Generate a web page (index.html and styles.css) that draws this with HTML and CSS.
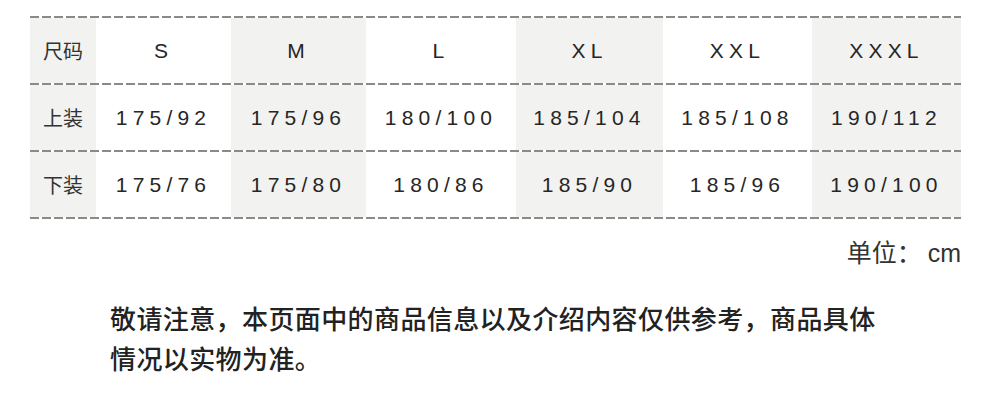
FILE: index.html
```html
<!DOCTYPE html>
<html lang="zh-CN">
<head>
<meta charset="utf-8">
<title>尺码表</title>
<link rel="stylesheet" href="styles.css">
</head>
<body>
<div class="page">
  <div class="size-table">
    <div class="row">
      <div class="cell label gray">尺码</div>
      <div class="cell">S</div>
      <div class="cell gray">M</div>
      <div class="cell">L</div>
      <div class="cell gray">XL</div>
      <div class="cell">XXL</div>
      <div class="cell gray">XXXL</div>
    </div>
    <div class="row">
      <div class="cell label gray">上装</div>
      <div class="cell">175/92</div>
      <div class="cell gray">175/96</div>
      <div class="cell">180/100</div>
      <div class="cell gray">185/104</div>
      <div class="cell">185/108</div>
      <div class="cell gray">190/112</div>
    </div>
    <div class="row">
      <div class="cell label gray">下装</div>
      <div class="cell">175/76</div>
      <div class="cell gray">175/80</div>
      <div class="cell">180/86</div>
      <div class="cell gray">185/90</div>
      <div class="cell">185/96</div>
      <div class="cell gray">190/100</div>
    </div>
  </div>
  <div class="unit">单位：<span class="unit-value">cm</span></div>
  <p class="note">敬请注意，本页面中的商品信息以及介绍内容仅供参考，商品具体情况以实物为准。</p>
</div>
</body>
</html>
```

FILE: styles.css
```css
html, body {
  margin: 0;
  padding: 0;
  background: #ffffff;
}

body {
  font-family: "Liberation Sans", "Noto Sans CJK SC", sans-serif;
  color: #2a2a2a;
}

.page {
  padding: 16px 29px 0 30px;
}

.size-table {
  width: 931px;
  padding-top: 2px;
  background: repeating-linear-gradient(to right, #8a8a8a 0 9px, transparent 9px 12px) left top / 100% 2px no-repeat;
}

.row {
  display: grid;
  grid-template-columns: 66px 135px 135px 150px 147px 149px 149px;
  padding-bottom: 2px;
  background: repeating-linear-gradient(to right, #8a8a8a 0 9px, transparent 9px 12px) left bottom / 100% 2px no-repeat;
}

.cell {
  height: 65px;
  display: flex;
  align-items: center;
  justify-content: center;
  font-size: 21px;
  letter-spacing: 5.2px;
  color: #262626;
}

.cell.gray {
  background: #f2f2f0;
}

.cell.label {
  letter-spacing: 0;
  font-family: "Noto Sans CJK SC", sans-serif;
  font-size: 20px;
  color: #333333;
}

.unit {
  width: 931px;
  text-align: right;
  margin-top: 17px;
  font-size: 25px;
  line-height: 34px;
  color: #333333;
  font-family: "Liberation Sans", "Noto Sans CJK SC", sans-serif;
}

.unit-value {
  margin-left: 6px;
}

.note {
  margin: 28px 0 0 80px;
  width: 790px;
  font-family: "Noto Sans CJK SC", sans-serif;
  font-size: 26px;
  font-weight: 500;
  letter-spacing: 0.4px;
  line-height: 40px;
  color: #222222;
}
```
